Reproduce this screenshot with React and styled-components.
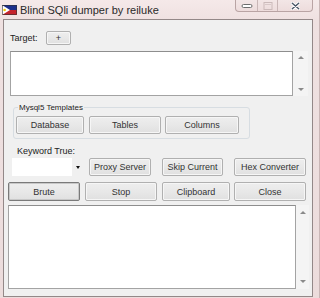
import React from "react";
import styled, { createGlobalStyle } from "styled-components";

const Global = createGlobalStyle`
  html, body { margin: 0; padding: 0; width: 320px; height: 298px; overflow: hidden; }
  body { font-family: "Liberation Sans", Arial, sans-serif; }
  * { box-sizing: border-box; }
`;

const Window = styled.div`
  width: 320px;
  height: 298px;
  display: flex;
  flex-direction: column;
  background: linear-gradient(180deg, #f5e9e9 0px, #efe1e1 20px, #ecdcdc 298px);
  border-right: 1px solid #c9b6b6;
`;

const TitleBar = styled.div`
  height: 19px;
  display: flex;
  justify-content: space-between;
  align-items: flex-start;
`;

const TitleLeft = styled.div`
  display: flex;
  align-items: center;
  padding: 3px 0 0 2px;
  height: 16px;
`;

const TitleText = styled.span`
  margin-left: 3px;
  font-size: 11px;
  color: #2a2a2a;
  line-height: 12px;
`;

const Controls = styled.div`
  display: flex;
  height: 12px;
  margin-right: 6px;
  border: 1px solid #b9a4a4;
  border-top: none;
  border-radius: 0 0 4px 4px;
  overflow: hidden;
  background: linear-gradient(180deg, #f3e6e6, #eddcdc);
`;

const Ctrl = styled.div`
  width: ${(p) => p.$w}px;
  display: flex;
  align-items: center;
  justify-content: center;
  border-left: ${(p) => (p.$first ? "none" : "1px solid #c9b6b6")};
`;

const Client = styled.div`
  margin-left: 3px;
  width: 310px;
  height: 278px;
  background: #f0f0f0;
  border: 1px solid #938888;
  display: flex;
  flex-direction: column;
`;

const TargetRow = styled.div`
  margin-top: 11px;
  padding-left: 6px;
  height: 14px;
  display: flex;
  align-items: center;
`;

const Label = styled.span`
  font-size: 9px;
  color: #222;
  line-height: 13px;
  width: ${(p) => (p.$w ? `${p.$w}px` : "auto")};
  margin-left: ${(p) => p.$ml || 0}px;
  margin-top: ${(p) => p.$mt || 0}px;
`;

const Button = styled.button`
  width: ${(p) => p.$w}px;
  height: ${(p) => p.$h || 18}px;
  margin: 0 0 0 ${(p) => p.$ml || 0}px;
  padding: 0;
  font-family: "Liberation Sans", Arial, sans-serif;
  font-size: 9px;
  color: #333;
  background: linear-gradient(180deg, #eeeeee 0%, #e8e8e8 50%, #e0e0e0 100%);
  border: 1px solid ${(p) => (p.$default ? "#7a7a7a" : "#b0b0b0")};
  box-shadow: ${(p) => (p.$default ? "inset 0 0 0 1px #c8c8c8" : "inset 0 0 0 1px #f6f6f6")};
  border-radius: 2px;
  display: flex;
  align-items: center;
  justify-content: center;
  flex: none;
`;

const BoxRow = styled.div`
  margin-top: ${(p) => p.$mt}px;
  padding-left: ${(p) => p.$pl}px;
  display: flex;
`;

const TextBox = styled.div`
  width: ${(p) => p.$w}px;
  height: ${(p) => p.$h}px;
  background: #fff;
  border: 1px solid #a3a3a3;
  border-top-color: #8e8e8e;
`;

const ScrollBar = styled.div`
  width: ${(p) => p.$w}px;
  height: ${(p) => p.$h}px;
  background: #f4f4f4;
  display: flex;
  flex-direction: column;
  justify-content: space-between;
  align-items: center;
  padding: ${(p) => p.$pad}px 0;
`;

const Arrow = styled.div`
  width: 0;
  height: 0;
  border-left: 3px solid transparent;
  border-right: 3px solid transparent;
  ${(p) =>
    p.$up
      ? "border-bottom: 3px solid #8a8a8a;"
      : "border-top: 3px solid #8a8a8a;"}
`;

const Group = styled.div`
  margin-top: 11px;
  margin-left: 9px;
  width: 237px;
  height: 32px;
  border: 1px solid #d7dde2;
  border-radius: 3px;
  display: flex;
  flex-direction: column;
`;

const Legend = styled.span`
  align-self: flex-start;
  margin: -7px 0 0 4px;
  padding: 0 1px;
  background: #f0f0f0;
  font-size: 8px;
  line-height: 13px;
  color: #222;
`;

const GroupButtons = styled.div`
  margin-top: 2px;
  padding-left: 2px;
  display: flex;
`;

const ButtonRow = styled.div`
  margin-top: ${(p) => p.$mt}px;
  margin-left: ${(p) => p.$ml}px;
  display: flex;
`;

const Combo = styled.div`
  width: 72px;
  height: 18px;
  background: #fff;
  display: flex;
  justify-content: flex-end;
  flex: none;
`;

const ComboDrop = styled.div`
  width: 12px;
  height: 100%;
  background: #f0f0f0;
  display: flex;
  align-items: center;
  justify-content: center;
`;

const SmallDown = styled.div`
  width: 0;
  height: 0;
  border-left: 2px solid transparent;
  border-right: 2px solid transparent;
  border-top: 3px solid #111;
`;

const Flag = () => (
  <svg width="15" height="10" viewBox="0 0 15 10">
    <rect x="0" y="0" width="15" height="5" fill="#1d2f8c" />
    <rect x="0" y="5" width="15" height="5" fill="#c4222c" />
    <polygon points="0,0 8,5 0,10" fill="#ffffff" />
    <circle cx="2.6" cy="5" r="1.3" fill="#f2c200" />
    <rect x="0.5" y="0.5" width="14" height="9" fill="none" stroke="#333" strokeWidth="0.6" />
  </svg>
);

const MinIcon = () => (
  <svg width="12" height="6" viewBox="0 0 12 6">
    <rect x="1" y="1.5" width="10" height="3" rx="1.5" fill="#fff" stroke="#6d6d6d" strokeWidth="1" />
  </svg>
);

const MaxIcon = () => (
  <svg width="10" height="8" viewBox="0 0 10 8">
    <rect x="1" y="0.5" width="8" height="7" fill="none" stroke="#cbbaba" strokeWidth="1" />
    <rect x="2" y="2" width="6" height="1" fill="#d8c8c8" />
  </svg>
);

const CloseIcon = () => (
  <svg width="9" height="8" viewBox="0 0 9 8">
    <path d="M1 1 L8 7 M8 1 L1 7" stroke="#fff" strokeWidth="3" strokeLinecap="round" />
    <path d="M1.3 1.2 L7.7 6.8 M7.7 1.2 L1.3 6.8" stroke="#4b5666" strokeWidth="1.4" strokeLinecap="round" />
  </svg>
);

export default function App() {
  return (
    <>
      <Global />
      <Window>
        <TitleBar>
          <TitleLeft>
            <Flag />
            <TitleText>Blind SQli dumper by reiluke</TitleText>
          </TitleLeft>
          <Controls>
            <Ctrl $w={21} $first>
              <MinIcon />
            </Ctrl>
            <Ctrl $w={20}>
              <MaxIcon />
            </Ctrl>
            <Ctrl $w={35}>
              <CloseIcon />
            </Ctrl>
          </Controls>
        </TitleBar>
        <Client>
          <TargetRow>
            <Label $w={36}>Target:</Label>
            <Button $w={25} $h={14}>+</Button>
          </TargetRow>
          <BoxRow $mt={6} $pl={6}>
            <TextBox $w={283} $h={45} />
            <ScrollBar $w={15} $h={45} $pad={5}>
              <Arrow $up />
              <Arrow />
            </ScrollBar>
          </BoxRow>
          <Group>
            <Legend>Mysql5 Templates</Legend>
            <GroupButtons>
              <Button $w={68}>Database</Button>
              <Button $w={72} $ml={5}>Tables</Button>
              <Button $w={74} $ml={4}>Columns</Button>
            </GroupButtons>
          </Group>
          <Label $ml={13} $mt={6}>Keyword True:</Label>
          <ButtonRow $mt={0} $ml={8}>
            <Combo>
              <ComboDrop>
                <SmallDown />
              </ComboDrop>
            </Combo>
            <Button $w={62} $ml={5}>Proxy Server</Button>
            <Button $w={61} $ml={11}>Skip Current</Button>
            <Button $w={72} $ml={11}>Hex Converter</Button>
          </ButtonRow>
          <ButtonRow $mt={6} $ml={4}>
            <Button $w={72} $h={19} $default>Brute</Button>
            <Button $w={72} $h={19} $ml={5}>Stop</Button>
            <Button $w={68} $h={19} $ml={5}>Clipboard</Button>
            <Button $w={72} $h={19} $ml={4}>Close</Button>
          </ButtonRow>
          <BoxRow $mt={4} $pl={4}>
            <TextBox $w={288} $h={84} />
            <ScrollBar $w={13} $h={84} $pad={6}>
              <Arrow $up />
              <Arrow />
            </ScrollBar>
          </BoxRow>
        </Client>
      </Window>
    </>
  );
}
